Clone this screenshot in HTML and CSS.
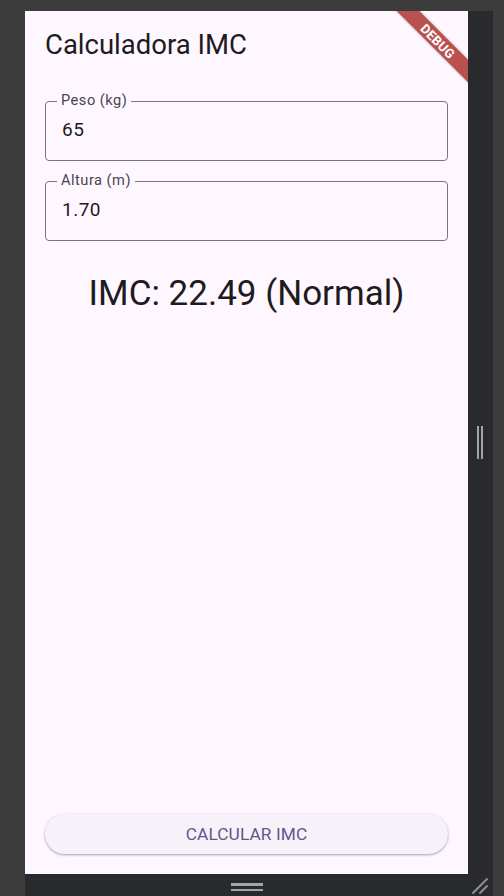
FILE: index.html
```html
<!DOCTYPE html>
<html lang="es">
<head>
<meta charset="utf-8">
<title>Calculadora IMC</title>
<link rel="stylesheet" href="styles.css">
</head>
<body>
<div class="stage">
  <div class="frame">
    <div class="screen">
      <header class="appbar">
        <h1 class="title">Calculadora IMC</h1>
      </header>
      <div class="body">
        <div class="field">
          <span class="label">Peso (kg)</span>
          <div class="value">65</div>
        </div>
        <div class="field">
          <span class="label">Altura (m)</span>
          <div class="value">1.70</div>
        </div>
        <p class="result">IMC: 22.49 (Normal)</p>
      </div>
      <div class="footer">
        <button class="btn">CALCULAR IMC</button>
      </div>
      <div class="banner"><span>DEBUG</span></div>
    </div>
    <div class="side">
      <div class="vhandle"><i></i><i></i></div>
    </div>
    <div class="bottom">
      <div class="hhandle"><i></i><i></i></div>
    </div>
    <div class="corner">
      <svg width="25" height="22" viewBox="0 0 25 22">
        <path d="M5 19 L19 5 M12 19 L19 12" stroke="#8e8f91" stroke-width="2" stroke-linecap="round" fill="none"/>
      </svg>
    </div>
  </div>
</div>
</body>
</html>
```
FILE: styles.css
```css
html, body {
  margin: 0;
  padding: 0;
  background: #3c3c3c;
  height: 896px;
  overflow: hidden;
}

.stage {
  padding: 11px 11px 0 25px;
}

.frame {
  width: 468px;
  height: 885px;
  background: #292a2d;
  display: grid;
  grid-template-columns: 443px 25px;
  grid-template-rows: 863px 22px;
}

.screen {
  position: relative;
  overflow: hidden;
  background: #fef7ff;
  display: flex;
  flex-direction: column;
  font-family: Roboto, "Noto Sans", sans-serif;
}

.appbar {
  height: 68px;
  display: flex;
  align-items: center;
  padding: 0 20px;
}

.title {
  margin: 0;
  font-size: 27.5px;
  font-weight: 400;
  color: #1d1b20;
  line-height: 32px;
}

.body {
  padding: 22px 20px 0;
  display: flex;
  flex-direction: column;
  gap: 20px;
}

.field {
  position: relative;
  height: 60px;
  box-sizing: border-box;
  border: 1px solid #79747e;
  border-radius: 4px;
  padding: 0 16px;
}

.label {
  position: absolute;
  top: -10px;
  left: 11px;
  padding: 0 4px;
  background: #fef7ff;
  font-size: 14.6px;
  letter-spacing: 0.5px;
  line-height: 16px;
  color: #49454f;
}

.value {
  font-size: 19px;
  letter-spacing: 0.5px;
  line-height: 55px;
  color: #1d1b20;
}

.result {
  margin: 13px 0 0;
  text-align: center;
  font-size: 35px;
  line-height: 40px;
  color: #1d1b20;
}

.footer {
  margin-top: auto;
  padding: 0 20px 20px;
}

.btn {
  display: block;
  width: 100%;
  height: 40px;
  border: none;
  border-radius: 20px;
  background: #f7f2fa;
  box-shadow: 0 1px 2px rgba(0,0,0,0.25), 0 1px 3px 1px rgba(0,0,0,0.08);
  font-family: Roboto, "Noto Sans", sans-serif;
  font-size: 17.3px;
  letter-spacing: 0.1px;
  color: #65558f;
  padding: 0;
}

.banner {
  position: absolute;
  left: 353px;
  top: 22px;
  width: 120px;
  height: 16px;
  background: #b8514f;
  transform: rotate(45deg);
  box-shadow: 0 0 3px rgba(0,0,0,0.3);
  display: flex;
  align-items: center;
  justify-content: center;
}

.banner span {
  font-family: Roboto, "Liberation Sans", sans-serif;
  font-weight: 700;
  font-size: 13px;
  color: #fff;
  letter-spacing: 0.2px;
}

.side {
  display: flex;
  align-items: center;
  justify-content: flex-start;
  padding-left: 9px;
}

.vhandle {
  display: flex;
  gap: 2px;
}

.vhandle i {
  display: block;
  width: 2px;
  height: 33px;
  background: #a3a4a6;
}

.bottom {
  display: flex;
  justify-content: center;
  padding-top: 9px;
}

.hhandle {
  display: flex;
  flex-direction: column;
  gap: 3px;
}

.hhandle i {
  display: block;
  width: 32px;
  height: 2.5px;
  background: #a3a4a6;
}

.corner {
  display: block;
}

.corner svg {
  display: block;
}
```
